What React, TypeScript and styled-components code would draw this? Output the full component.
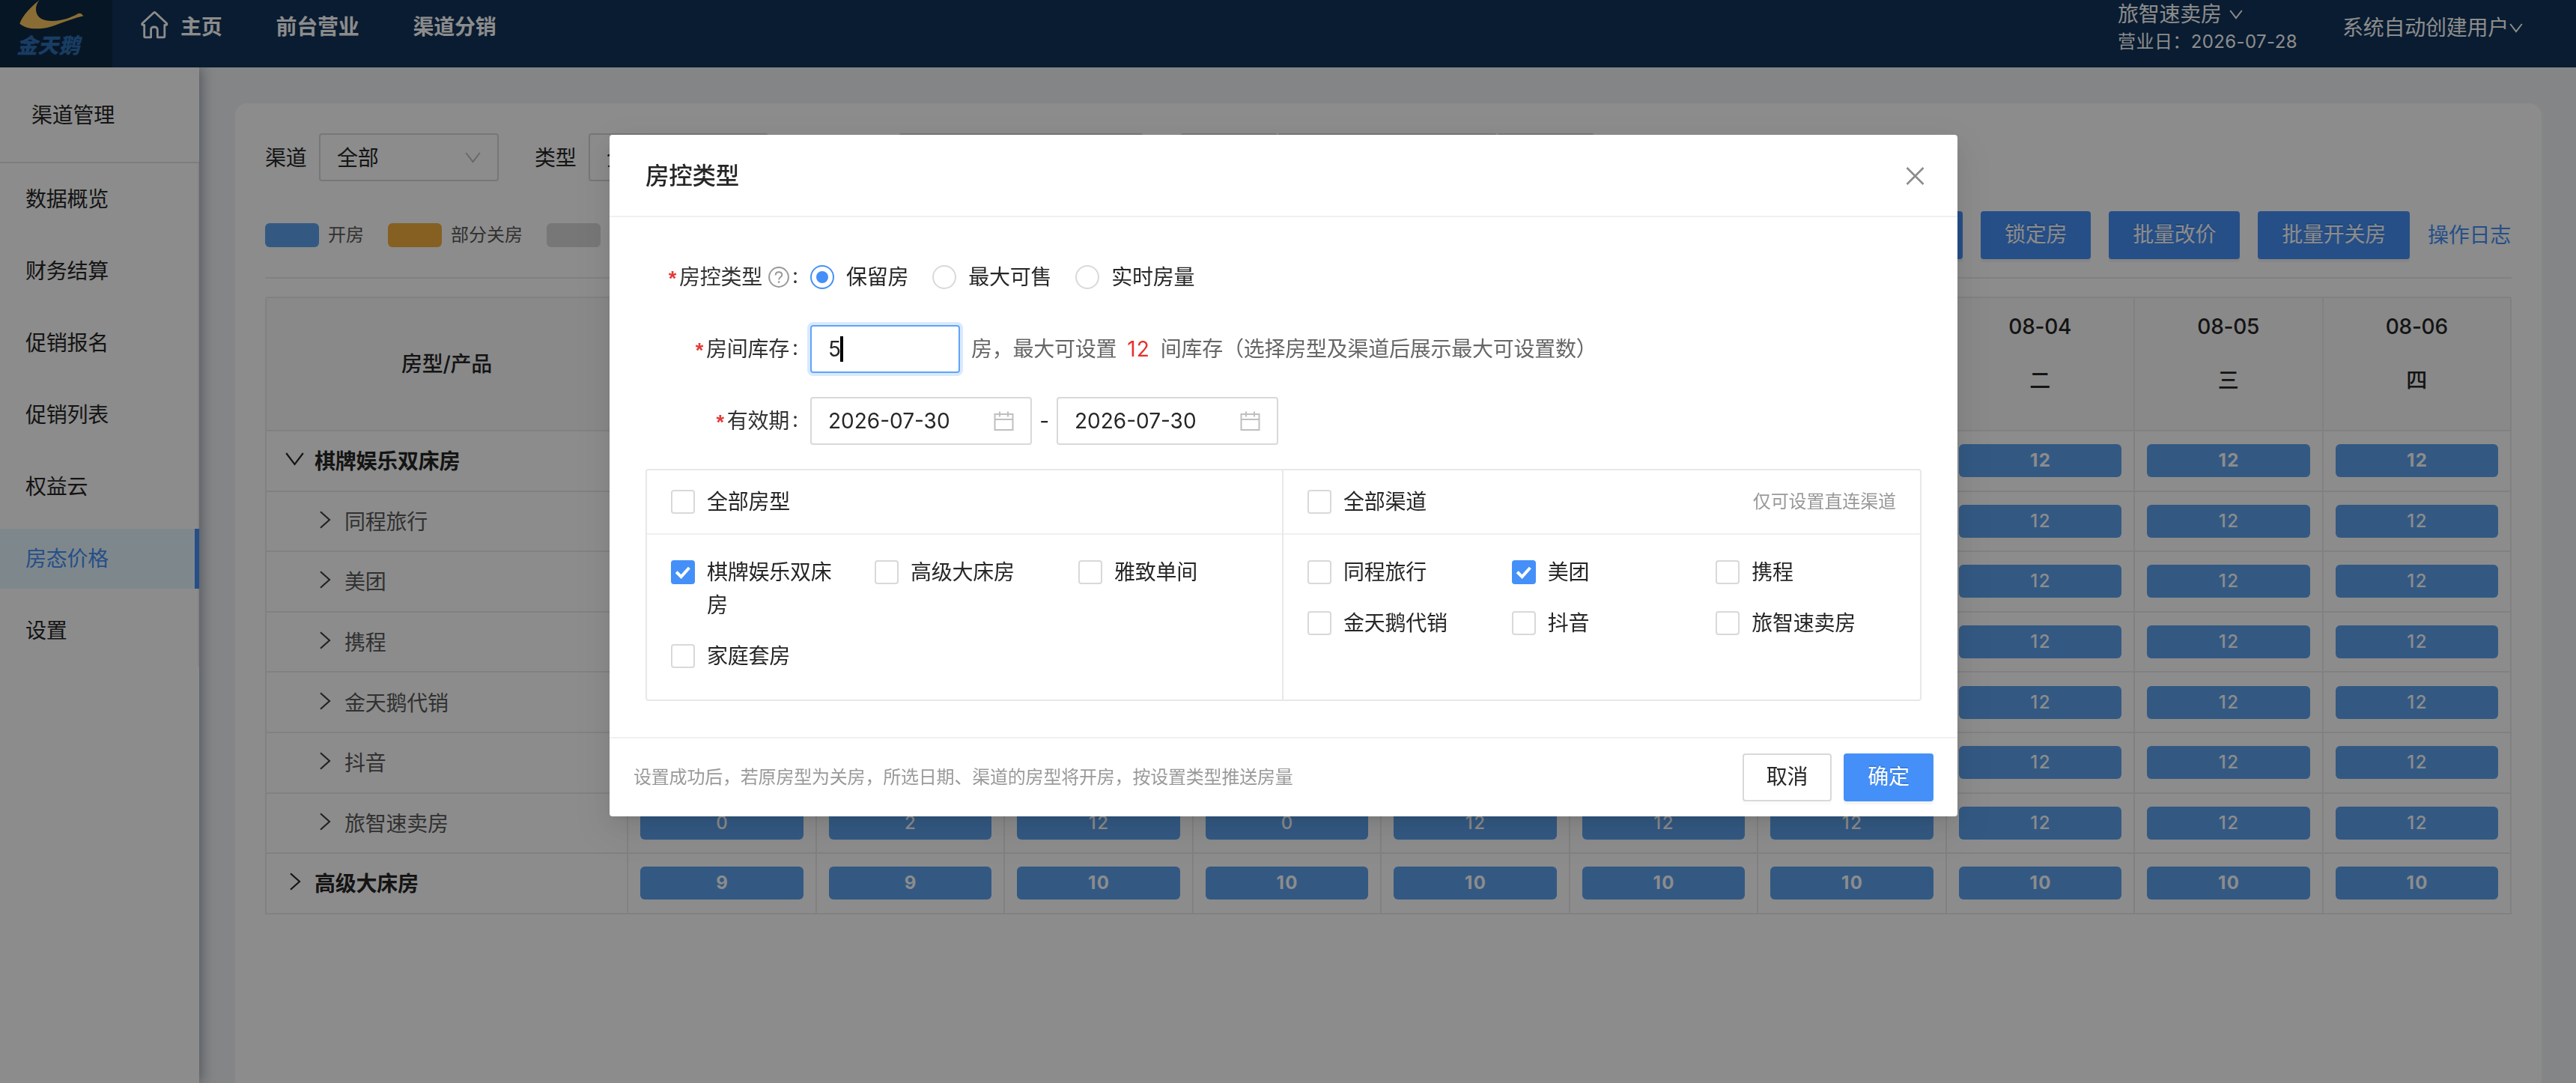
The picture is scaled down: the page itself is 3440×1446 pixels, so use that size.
import React from 'react';
import styled, { createGlobalStyle, css } from 'styled-components';

const primary = '#4590f8';
const line = '#ebebeb';

const GlobalStyle = createGlobalStyle`
  * { box-sizing: border-box; }
  html, body { margin: 0; padding: 0; }
  body {
    height: 1446px;
    overflow: hidden;
    font-family: Inter, 'Noto Sans CJK SC', 'Noto Sans', sans-serif;
    font-size: 28px;
    line-height: 44px;
    letter-spacing: -0.25px;
    color: #262626;
    background: #f0f2f5;
  }
`;

/* ---------- page shell ---------- */

const Page = styled.div`
  height: 1446px;
  display: flex;
  flex-direction: column;
`;

const TopBar = styled.header`
  position: relative;
  z-index: 2;
  flex: none;
  height: 90px;
  display: flex;
  background: #12335a;
  color: #fff;
`;

const LogoBox = styled.div`
  width: 150px;
  height: 90px;
  background: #0e2942;
  border-right: 4px solid #0e2744;
`;

const LogoMark = styled.svg`
  display: block;
  width: 146px;
  height: 42px;
`;

const LogoName = styled.div`
  padding-left: 22px;
  font-size: 28px;
  line-height: 39px;
  font-weight: 800;
  font-style: italic;
  letter-spacing: 0.3px;
  color: #2f6eb4;
`;

const TopNav = styled.nav`
  display: flex;
  align-items: center;
  height: 72px;
  padding-left: 38px;
  gap: 72px;
  font-weight: 700;
`;

const TopLink = styled.div`
  display: flex;
  align-items: center;
  line-height: 40px;
  svg { display: block; margin: 0 16px 6px 0; }
`;

const TopRight = styled.div`
  margin-left: auto;
  display: flex;
  height: 74px;
  align-items: center;
  padding-right: 71px;
  gap: 60px;
  color: #fff;
`;

const HotelInfo = styled.div`
  display: flex;
  flex-direction: column;
`;

const HotelName = styled.div`
  display: flex;
  align-items: center;
  gap: 10px;
  height: 38px;
`;

const BizDay = styled.div`
  font-size: 24px;
  line-height: 36px;
  height: 36px;
  letter-spacing: 0.4px;
`;

const UserName = styled.div`
  display: flex;
  align-items: center;
  gap: 1px;
`;

const Body = styled.div`
  flex: 1;
  min-height: 0;
  display: flex;
`;

const Sider = styled.aside`
  position: relative;
  z-index: 1;
  width: 266px;
  background: #fff;
  box-shadow: 4px 0 16px rgba(0, 21, 41, 0.35);
`;

const SiderTitle = styled.div`
  height: 128px;
  padding: 2px 0 0 42px;
  display: flex;
  align-items: center;
  border-bottom: 2px solid #e1e5e8;
`;

const Menu = styled.ul`
  list-style: none;
  margin: 0;
  padding: 8px 0;
  border-right: 2px solid #f0f0f0;
  display: flex;
  flex-direction: column;
  gap: 16px;
`;

const MenuItem = styled.li<{ $active?: boolean }>`
  height: 80px;
  margin-right: -2px;
  padding-left: 34px;
  line-height: 81px;
  ${(p) =>
    p.$active &&
    css`
      color: ${primary};
      background: #e6f7ff;
      border-right: 6px solid ${primary};
    `}
`;

const Main = styled.main`
  flex: 1;
  padding: 48px 46px 0 48px;
  display: flex;
`;

const Card = styled.section`
  flex: 1;
  background: #fff;
  border-radius: 16px 16px 0 0;
  padding: 40px 40px 0;
`;

/* ---------- filters and toolbar ---------- */

const Filters = styled.div`
  display: flex;
  align-items: center;
  height: 64px;
`;

const FilterLabel = styled.span`
  width: 72px;
  padding-top: 2px;
`;

const Select = styled.div<{ $w: number; $mr: number; $muted?: boolean }>`
  width: ${(p) => p.$w}px;
  height: 64px;
  margin-right: ${(p) => p.$mr}px;
  padding: 1px 22px 0;
  border: 2px solid #d9d9d9;
  border-radius: 4px;
  background: ${(p) => (p.$muted ? '#f5f5f5' : '#fff')};
  display: flex;
  align-items: center;
  justify-content: space-between;
`;

const Toolbar = styled.div`
  display: flex;
  align-items: center;
  height: 64px;
  margin-top: 40px;
`;

const Legend = styled.div`
  display: flex;
  align-items: center;
  gap: 12px;
  margin-right: 32px;
  font-size: 24px;
  letter-spacing: 0;
  color: #595959;
`;

const Swatch = styled.i<{ $color: string }>`
  width: 72px;
  height: 32px;
  border-radius: 6px;
  background: ${(p) => p.$color};
`;

const Actions = styled.div`
  margin-left: auto;
  display: flex;
  align-items: center;
  gap: 24px;
`;

const Button = styled.button<{ $primary?: boolean; $pad?: number }>`
  height: 64px;
  padding: 0 ${(p) => p.$pad ?? 32}px 2px;
  border: ${(p) => (p.$primary ? 'none' : '2px solid #d9d9d9')};
  border-radius: 4px;
  font: inherit;
  letter-spacing: inherit;
  color: ${(p) => (p.$primary ? '#fff' : '#262626')};
  background: ${(p) => (p.$primary ? primary : '#fff')};
  box-shadow: 0 4px 0 rgba(0, 0, 0, ${(p) => (p.$primary ? 0.045 : 0.016)});
  text-shadow: ${(p) => (p.$primary ? '0 -2px 0 rgba(0,0,0,.12)' : 'none')};
`;

const LogLink = styled.a`
  color: ${primary};
  margin-right: 1px;
`;

const Divider = styled.div`
  height: 2px;
  margin: 24px 0;
  background: ${line};
`;

/* ---------- room table ---------- */

const Table = styled.div`
  border-top: 2px solid ${line};
  border-left: 2px solid ${line};
  border-radius: 4px 4px 0 0;
`;

const Row = styled.div`
  display: grid;
  grid-template-columns: 483px repeat(10, 251.5px);
  height: 80.6px;
`;

const HeadRow = styled(Row)`
  height: 178px;
  background: #fafafa;
  font-weight: 500;
`;

const cell = css`
  border-right: 2px solid ${line};
  border-bottom: 2px solid ${line};
`;

const HeadCell = styled.div`
  ${cell}
  display: flex;
  flex-direction: column;
  align-items: center;
  justify-content: center;
`;

const DateCell = styled.div`
  ${cell}
  padding-top: 2px;
  text-align: center;
  line-height: 72px;
`;

const NameCell = styled.div<{ $child?: boolean; $open?: boolean }>`
  ${cell}
  display: flex;
  align-items: center;
  gap: ${(p) => (p.$open ? 14 : 18)}px;
  padding: 2px 0 0 ${(p) => (p.$child ? 71 : p.$open ? 25 : 31)}px;
  font-weight: ${(p) => (p.$child ? 400 : 700)};
  color: ${(p) => (p.$child ? '#595959' : '#262626')};
  svg { color: ${(p) => (p.$child ? '#404040' : '#262626')}; margin-bottom: 6px; }
`;

const StockCell = styled.div`
  ${cell}
  padding: 0 16px;
  display: flex;
  align-items: center;
`;

const Chip = styled.div<{ $bold?: boolean }>`
  flex: 1;
  height: 44px;
  border-radius: 6px;
  background: #5da2ee;
  color: #fff;
  font-size: 24px;
  line-height: 43px;
  letter-spacing: 1.6px;
  text-indent: 2px;
  text-align: center;
  font-weight: ${(p) => (p.$bold ? 700 : 500)};
`;

/* ---------- dialog ---------- */

const Mask = styled.div`
  position: fixed;
  inset: 0;
  z-index: 10;
  background: rgba(0, 0, 0, 0.45);
  padding: 180px 0 0 814px;
`;

const Dialog = styled.div`
  width: 1800px;
  height: 910px;
  display: flex;
  flex-direction: column;
  background: #fff;
  border-radius: 4px;
  box-shadow: 0 6px 12px -8px rgba(0, 0, 0, 0.12), 0 12px 32px rgba(0, 0, 0, 0.08),
    0 18px 56px 16px rgba(0, 0, 0, 0.05);
`;

const DialogHead = styled.div`
  height: 110px;
  padding: 2px 44px 0 48px;
  display: flex;
  align-items: center;
  justify-content: space-between;
  border-bottom: 2px solid #f0f0f0;
  font-size: 31.5px;
  font-weight: 500;
`;

const DialogBody = styled.div`
  flex: 1;
  padding: 48px 48px 0;
`;

const FormRow = styled.div`
  display: flex;
  align-items: center;
  height: 64px;
  margin-bottom: 32px;
`;

const Label = styled.div`
  width: 220px;
  display: flex;
  align-items: center;
  justify-content: flex-end;
  white-space: nowrap;
  color: #333;
  svg { margin-left: 8px; flex: none; }
`;

const Star = styled.span`
  font-family: 'Liberation Sans', sans-serif;
  font-weight: 700;
  font-size: 27px;
  margin-right: 4px;
  padding-top: 3px;
  color: #e23a36;
`;

const Colon = styled.span`
  width: 8px;
  margin: 0 16px 4px 4px;
`;

const RadioItem = styled.label`
  display: flex;
  align-items: center;
  gap: 16px;
  margin-right: 32px;
`;

const RadioDot = styled.span<{ $on?: boolean }>`
  width: 32px;
  height: 32px;
  border-radius: 50%;
  border: 2px solid ${(p) => (p.$on ? primary : '#d9d9d9')};
  display: grid;
  place-items: center;
  &::after {
    content: '';
    width: 16px;
    height: 16px;
    border-radius: 50%;
    background: ${(p) => (p.$on ? primary : 'transparent')};
  }
`;

const Field = styled.div<{ $w: number; $focus?: boolean }>`
  width: ${(p) => p.$w}px;
  height: 64px;
  padding: 0 22px;
  display: flex;
  align-items: center;
  letter-spacing: 0;
  border: 2px solid ${(p) => (p.$focus ? '#5ea5fa' : '#d9d9d9')};
  border-radius: 4px;
  box-shadow: ${(p) => (p.$focus ? '0 0 0 4px rgba(69,144,248,.2)' : 'none')};
  svg { margin-left: auto; }
`;

const Caret = styled.i`
  width: 4px;
  height: 34px;
  margin-left: -1px;
  background: #000;
`;

const Hint = styled.span`
  margin-left: 15px;
  color: #666;
  b { margin: 0 14px; font-weight: 400; letter-spacing: 1px; color: #e8302f; }
`;

const Dash = styled.span`
  width: 33px;
  text-align: center;
`;

const Panels = styled.div`
  display: grid;
  grid-template-columns: 850px 1fr;
  height: 310px;
  border: 2px solid #e8e8e8;
  border-radius: 4px;
`;

const Panel = styled.div<{ $divided?: boolean }>`
  border-right: ${(p) => (p.$divided ? '2px solid #e8e8e8' : 'none')};
`;

const PanelHead = styled.div`
  display: flex;
  align-items: center;
  justify-content: space-between;
  height: 86px;
  padding: 0 32px;
  border-bottom: 2px solid #f0f0f0;
`;

const Note = styled.span`
  font-size: 24px;
  letter-spacing: -0.1px;
  color: #999;
`;

const Options = styled.div`
  display: grid;
  grid-template-columns: repeat(3, 1fr);
  row-gap: 24px;
  padding: 28px 0 0 32px;
`;

const CheckItem = styled.label`
  display: flex;
  align-items: flex-start;
  gap: 16px;
  padding-right: 32px;
`;

const Box = styled.span<{ $on?: boolean }>`
  flex: none;
  width: 32px;
  height: 32px;
  margin-top: 6px;
  border-radius: 4px;
  border: 2px solid ${(p) => (p.$on ? primary : '#d9d9d9')};
  background: ${(p) => (p.$on ? primary : '#fff')};
  display: grid;
  place-items: center;
`;

const DialogFoot = styled.div`
  height: 106px;
  padding: 0 32px;
  border-top: 2px solid #f0f0f0;
  display: flex;
  align-items: center;
  gap: 16px;
`;

const FootNote = styled(Note)`
  margin-right: auto;
  letter-spacing: -0.2px;
`;

/* ---------- icons ---------- */

const HomeIcon = () => (
  <svg width="37" height="37" viewBox="0 0 37 37" fill="none" stroke="#fff" strokeWidth="2.8" strokeLinejoin="round">
    <path d="M17.5 1.8Q18.5 1.2 19.5 2L34.6 16.2Q35.6 18.2 33.4 18.4H31.8V33.5Q31.8 34.8 30.5 34.8H22.3V24.5Q22 21 17.8 21T13.6 24.5V34.8H6Q4.7 34.8 4.7 33.5V18.4H3Q1 18 2 16.2Z" />
  </svg>
);

const Chevron = ({ w, h, dir, stroke = 2, color = 'currentColor' }: { w: number; h: number; dir: 'down' | 'right'; stroke?: number; color?: string }) => (
  <svg width={w} height={h} viewBox={`0 0 ${w} ${h}`} fill="none" stroke={color} strokeWidth={stroke}>
    <path d={dir === 'down' ? `M1.2 1L${w / 2} ${h - 2}L${w - 1.2} 1` : `M1 1.2L${w - 2} ${h / 2}L1 ${h - 1.2}`} />
  </svg>
);

const CloseIcon = () => (
  <svg width="25" height="26" viewBox="0 0 25 26" stroke="#8c8c8c" strokeWidth="2.6" fill="none">
    <path d="M1.5 2L23.5 24M23.5 2L1.5 24" />
  </svg>
);

const HelpIcon = () => (
  <svg width="28" height="28" viewBox="0 0 28 28" fill="none" stroke="#999" strokeWidth="2">
    <circle cx="14" cy="14" r="12.9" />
    <path d="M9.7 11.4C9.7 8.8 11.5 7.2 14 7.2S18.3 8.8 18.3 11.1C18.3 14 14.1 14.2 14.1 17.4" />
    <circle cx="14.1" cy="20.6" r="1.3" fill="#999" stroke="none" />
  </svg>
);

const CalendarIcon = () => (
  <svg width="27" height="27" viewBox="0 0 27 27" fill="none" stroke="#bfbfbf" strokeWidth="2">
    <path d="M1.5 4H25.5V25H1.5ZM1.5 11H25.5M8 .5V7.5M19 .5V7.5" />
  </svg>
);

const Tick = () => (
  <svg width="24" height="24" viewBox="0 0 24 24" fill="none" stroke="#fff" strokeWidth="4">
    <path d="M3.2 11.8L9.6 18L20.4 6" />
  </svg>
);

/* ---------- data ---------- */

const menu = ['数据概览', '财务结算', '促销报名', '促销列表', '权益云', '房态价格', '设置'];

const days: [string, string][] = [
  ['07-28', '二'], ['07-29', '三'], ['07-30', '四'], ['07-31', '五'], ['08-01', '六'],
  ['08-02', '日'], ['08-03', '一'], ['08-04', '二'], ['08-05', '三'], ['08-06', '四'],
];

const full = Array(10).fill(12);

const rows: { name: string; child?: boolean; open?: boolean; stock: number[] }[] = [
  { name: '棋牌娱乐双床房', open: true, stock: full },
  { name: '同程旅行', child: true, stock: full },
  { name: '美团', child: true, stock: full },
  { name: '携程', child: true, stock: full },
  { name: '金天鹅代销', child: true, stock: full },
  { name: '抖音', child: true, stock: full },
  { name: '旅智速卖房', child: true, stock: [0, 2, 12, 0, 12, 12, 12, 12, 12, 12] },
  { name: '高级大床房', stock: [9, 9, 10, 10, 10, 10, 10, 10, 10, 10] },
];

const Check = ({ on, children }: { on?: boolean; children: React.ReactNode }) => (
  <CheckItem>
    <Box $on={on}>{on && <Tick />}</Box>
    <span>{children}</span>
  </CheckItem>
);

const Radio = ({ on, children }: { on?: boolean; children: React.ReactNode }) => (
  <RadioItem>
    <RadioDot $on={on} />
    {children}
  </RadioItem>
);

const roomTypes = ['棋牌娱乐双床房', '高级大床房', '雅致单间', '家庭套房'];
const channels = ['同程旅行', '美团', '携程', '金天鹅代销', '抖音', '旅智速卖房'];

export default function App() {
  return (
    <>
      <GlobalStyle />
      <Page>
        <TopBar>
          <LogoBox>
            <LogoMark viewBox="0 0 146 42">
              <path
                fill="#fbc661"
                d="M52.5 0C44 7 30 20 26.3 31.5C33 37.5 42 39 56 38C71 37 87 27 111.5 21.3L108.5 18.3Q105 16.5 102 19.5C96 22.5 84 28 70 28C55 28 48.5 22 48 13C47.8 8 49.5 4 52.5 0Z"
              />
            </LogoMark>
            <LogoName>金天鹅</LogoName>
          </LogoBox>
          <TopNav>
            <TopLink><HomeIcon />主页</TopLink>
            <TopLink>前台营业</TopLink>
            <TopLink>渠道分销</TopLink>
          </TopNav>
          <TopRight>
            <HotelInfo>
              <HotelName>旅智速卖房<Chevron w={18} h={13} dir="down" /></HotelName>
              <BizDay>营业日：2026-07-28</BizDay>
            </HotelInfo>
            <UserName>系统自动创建用户<Chevron w={18} h={13} dir="down" /></UserName>
          </TopRight>
        </TopBar>
        <Body>
          <Sider>
            <SiderTitle>渠道管理</SiderTitle>
            <Menu>
              {menu.map((m) => (
                <MenuItem key={m} $active={m === '房态价格'}>{m}</MenuItem>
              ))}
            </Menu>
          </Sider>
          <Main>
            <Card>
              <Filters>
                <FilterLabel>渠道</FilterLabel>
                <Select $w={240} $mr={48}>全部<Chevron w={21} h={15} dir="down" color="#bfbfbf" /></Select>
                <FilterLabel>类型</FilterLabel>
                <Select $w={240} $mr={174}>全部<Chevron w={21} h={15} dir="down" color="#bfbfbf" /></Select>
                <Select $w={327} $mr={49} />
                <Select $w={130} $mr={0} $muted />
                <Select $w={293} $mr={0} />
                <Select $w={130} $mr={0} $muted />
              </Filters>
              <Toolbar>
                <Legend><Swatch $color="#5da2ee" /><span>开房</span></Legend>
                <Legend><Swatch $color="#f4af3e" /><span>部分关房</span></Legend>
                <Legend><Swatch $color="#d9d9d9" /><span>关房</span></Legend>
                <Actions>
                  <Button $primary>房控类型</Button>
                  <Button $primary>锁定房</Button>
                  <Button $primary>批量改价</Button>
                  <Button $primary>批量开关房</Button>
                  <LogLink>操作日志</LogLink>
                </Actions>
              </Toolbar>
              <Divider />
              <Table>
                <HeadRow>
                  <HeadCell>房型/产品</HeadCell>
                  {days.map(([d, w]) => (
                    <DateCell key={d}>
                      <div>{d}</div>
                      <div>{w}</div>
                    </DateCell>
                  ))}
                </HeadRow>
                {rows.map((r) => (
                  <Row key={r.name}>
                    <NameCell $child={r.child} $open={r.open}>
                      {r.open ? (
                        <Chevron w={25} h={18} dir="down" stroke={2.2} />
                      ) : (
                        <Chevron w={15} h={24} dir="right" stroke={2.2} />
                      )}
                      {r.name}
                    </NameCell>
                    {r.stock.map((n, i) => (
                      <StockCell key={i}><Chip $bold={!r.child}>{n}</Chip></StockCell>
                    ))}
                  </Row>
                ))}
              </Table>
            </Card>
          </Main>
        </Body>
      </Page>

      <Mask>
        <Dialog>
          <DialogHead>房控类型<CloseIcon /></DialogHead>
          <DialogBody>
            <FormRow>
              <Label><Star>*</Star>房控类型<HelpIcon /><Colon>:</Colon></Label>
              <Radio on>保留房</Radio>
              <Radio>最大可售</Radio>
              <Radio>实时房量</Radio>
            </FormRow>
            <FormRow>
              <Label><Star>*</Star>房间库存<Colon>:</Colon></Label>
              <Field $w={200} $focus>5<Caret /></Field>
              <Hint>房，最大可设置<b>12</b>间库存（选择房型及渠道后展示最大可设置数）</Hint>
            </FormRow>
            <FormRow>
              <Label><Star>*</Star>有效期<Colon>:</Colon></Label>
              <Field $w={296}>2026-07-30<CalendarIcon /></Field>
              <Dash>-</Dash>
              <Field $w={296}>2026-07-30<CalendarIcon /></Field>
            </FormRow>
            <Panels>
              <Panel $divided>
                <PanelHead><Check>全部房型</Check></PanelHead>
                <Options>
                  {roomTypes.map((t, i) => <Check key={t} on={i === 0}>{t}</Check>)}
                </Options>
              </Panel>
              <Panel>
                <PanelHead><Check>全部渠道</Check><Note>仅可设置直连渠道</Note></PanelHead>
                <Options>
                  {channels.map((t, i) => <Check key={t} on={i === 1}>{t}</Check>)}
                </Options>
              </Panel>
            </Panels>
          </DialogBody>
          <DialogFoot>
            <FootNote>设置成功后，若原房型为关房，所选日期、渠道的房型将开房，按设置类型推送房量</FootNote>
            <Button $pad={29.6}>取消</Button>
            <Button $primary $pad={32.3}>确定</Button>
          </DialogFoot>
        </Dialog>
      </Mask>
    </>
  );
}
